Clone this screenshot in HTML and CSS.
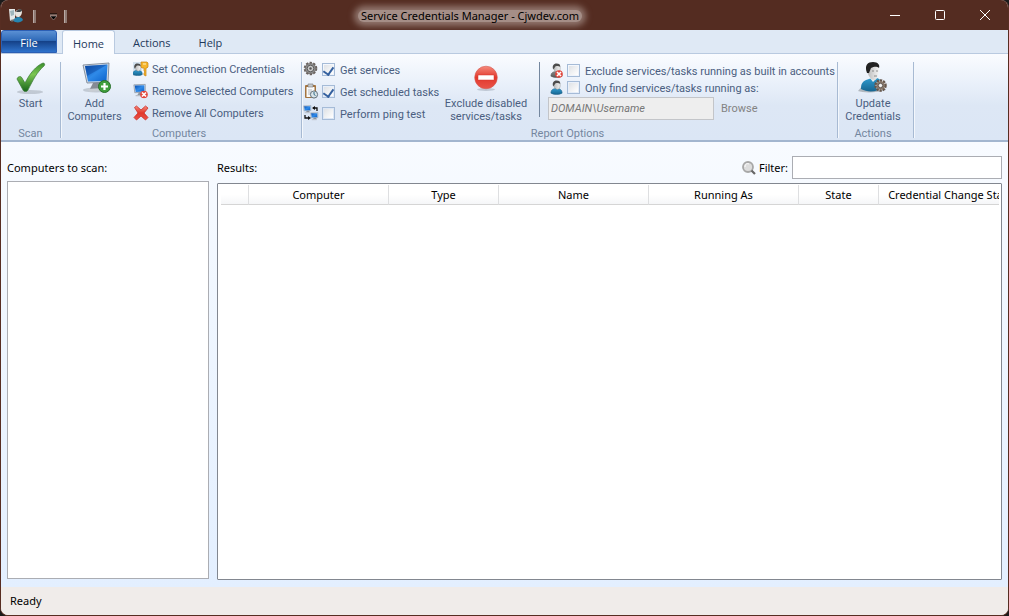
FILE: index.html
```html
<!DOCTYPE html>
<html lang="en">
<head>
<meta charset="utf-8">
<title>Service Credentials Manager - Cjwdev.com</title>
<link rel="stylesheet" href="styles.css">
</head>
<body>
<svg class="defs" aria-hidden="true">
  <defs>
    <linearGradient id="green" x1="0" y1="0" x2="0" y2="1"><stop offset="0" stop-color="#3b8f2c"/><stop offset=".4" stop-color="#7cc653"/><stop offset="1" stop-color="#17651a"/></linearGradient>
    <linearGradient id="screen" x1="0" y1="0" x2="1" y2="1"><stop offset="0" stop-color="#0a4fb0"/><stop offset=".5" stop-color="#2f8ae8"/><stop offset="1" stop-color="#0b62cc"/></linearGradient>
    <linearGradient id="red" x1="0" y1="0" x2="0" y2="1"><stop offset="0" stop-color="#f58a7c"/><stop offset=".5" stop-color="#e2382c"/><stop offset="1" stop-color="#e9544a"/></linearGradient>
    <linearGradient id="shirt" x1="0" y1="0" x2="0" y2="1"><stop offset="0" stop-color="#2f9bcf"/><stop offset="1" stop-color="#176590"/></linearGradient>
    <linearGradient id="face" x1="0" y1="0" x2="1" y2="0"><stop offset="0" stop-color="#b9b9b9"/><stop offset="1" stop-color="#f4f4f4"/></linearGradient>
    <symbol id="pc" viewBox="0 0 16 16"><path d="M1 1.500 14 1v9L2 10.500z" fill="#dfe6ee" stroke="#5d6b7c" stroke-width=".6"/><path d="M2 2.400 13 2v7.200L3 9.600z" fill="url(#screen)"/><path d="M7 10h4l1 3H5z" fill="#8d949c"/><path d="M3 13h9v1.500H3z" fill="#b7bdc5"/></symbol>
    <symbol id="person" viewBox="0 0 16 16"><path d="M2 14c0-4 3-5 6-5s6 1 6 5c-3 2-9 2-12 0z" fill="url(#shirt)" stroke="#175a80" stroke-width=".5"/><path d="M5 4c0-3 7-3 7 1 0 3-1 5-3 5S5 8 5 4z" fill="url(#face)" stroke="#777" stroke-width=".4"/><path d="M4.500 7C3 3 5 .500 8 .500c3 0 4 1 4 3.500C10 3 9 3 7 3.500z" fill="#4c4c4c"/></symbol>
    <symbol id="cross" viewBox="0 0 8 8"><circle cx="4" cy="4" r="3.800" fill="#e2463c"/><path d="m2 2 4 4m0-4L2 6" stroke="#fff" stroke-width="1.600"/></symbol>
    <symbol id="gear" viewBox="0 0 16 16"><circle cx="8" cy="8" r="6" fill="#777" stroke="#6a625e" stroke-width="2.500" stroke-dasharray="2.400 1.400"/><circle cx="8" cy="8" r="5.400" fill="#8b8b8b"/><circle cx="8" cy="8" r="3.500" fill="#ccc" stroke="#555"/><circle cx="8" cy="8" r="1.300" fill="#555"/></symbol>
  </defs>
</svg>
<div class="window">
  <header class="titlebar">
    <div class="quick">
      <svg width="16" height="16" viewBox="0 0 16 16"><path d="M1 1h6v11L2 13z" fill="#e4e9e9"/><path d="m2 3 4-1v5L3 8z" fill="#9fb7bd"/><path d="M7 5c0-3 6-5 7-2 0 4-2 6-4 6S7 8 7 5z" fill="#e8e5df"/><path d="M8 4c1-3 6-4 6-1l-2 1z" fill="#3d4447"/><path d="M5 13c1-4 8-6 10-1-2 3-7 3-10 1z" fill="#2585b1"/><path d="m2 12 5-1-3 3z" fill="#777"/></svg>
      <span class="bar"></span>
      <button class="customize" aria-label="Customize quick access toolbar"><svg width="7" height="7" viewBox="0 0 7 7"><path d="M0 1h7" stroke="#000"/><path d="M0 2h7" stroke="#cdbdb8" stroke-width=".8"/><path d="M0 3h7L3.500 7z" fill="#000" stroke="#cdbdb8" stroke-width=".5"/></svg></button>
      <span class="bar"></span>
    </div>
    <h1 class="title">Service Credentials Manager - Cjwdev.com</h1>
    <div class="controls">
      <button aria-label="Minimize"><svg width="10" height="10" viewBox="0 0 10 10"><path d="M0 5.500h10"/></svg></button>
      <button aria-label="Maximize"><svg width="10" height="10" viewBox="0 0 10 10"><rect x=".5" y=".5" width="9" height="9" rx="1"/></svg></button>
      <button aria-label="Close"><svg width="10" height="10" viewBox="0 0 10 10"><path d="m0 0 10 10M10 0 0 10"/></svg></button>
    </div>
  </header>

  <nav class="tabs">
    <button class="tab file">File</button>
    <button class="tab active">Home</button>
    <button class="tab">Actions</button>
    <button class="tab">Help</button>
  </nav>

  <section class="ribbon">
    <div class="group scan">
      <div class="tools">
        <button class="large"><svg width="32" height="32" viewBox="0 0 32 32"><ellipse cx="15" cy="30" rx="13" ry="2" fill="#a9b0ba" opacity=".6"/><path d="M2 17c1-3 4-3 5-1l3 5C15 11 21 4 28 1c2 0 2 2 1 3-7 6-11 14-16 24-1 2-4 2-5 0z" fill="url(#green)" stroke="#3b7a38" stroke-width=".7"/></svg>Start</button>
      </div>
      <div class="caption">Scan</div>
    </div>

    <div class="group computers">
      <div class="tools">
        <button class="large"><svg width="32" height="32" viewBox="0 0 32 32"><ellipse cx="17" cy="28" rx="13" ry="2.500" fill="#aab2bd" opacity=".6"/><path d="m14 21 9-1 2 7H11z" fill="#858b94"/><path d="m8 27 16-1 3 2-16 2z" fill="#c8cdd4"/><path d="m4 3 26-2-1 19-21 1z" fill="#d8dfe7" stroke="#707b8a" stroke-width=".8"/><path d="m6 4 22.500-1.500L27.500 19 9 19.500z" fill="url(#screen)"/><path d="M6 4 28.500 2.500 8 14z" fill="#0a3f96" opacity=".4"/><circle cx="25.500" cy="24.500" r="6" fill="#3f9e3c" stroke="#286f2a"/><path d="M25.500 21v7M22 24.500h7" stroke="#fff" stroke-width="2.200"/></svg>Add<br>Computers</button>
        <div class="stack actions">
          <button class="small"><svg width="16" height="16" viewBox="0 0 16 16"><rect y="1" width="9" height="14" fill="#d4e2ef"/><use href="#person" x="-2" y="2" width="13" height="13"/><path d="M8 1h6l1 1v4l-1 1h-1v8l-2-1v-2l1-1-1-1V7H9L8 6z" fill="#f5b52d" stroke="#c98412" stroke-width=".7"/><path d="M10 3h3" stroke="#fff2bd"/></svg>Set Connection Credentials</button>
          <button class="small"><svg width="16" height="16" viewBox="0 0 16 16"><use href="#pc" width="14" height="15"/><use href="#cross" x="7" y="7.500" width="8" height="8"/></svg>Remove Selected Computers</button>
          <button class="small"><svg width="16" height="16" viewBox="0 0 16 16"><path d="m1.500 2.500 2-1.500L8 5l4.500-4L15 3l-4 5 4 4.500-2.500 2.500L8 11l-4.500 4L1 12.500 5 8z" fill="url(#red)" stroke="#cb302a" stroke-width=".8"/></svg>Remove All Computers</button>
        </div>
      </div>
      <div class="caption">Computers</div>
    </div>

    <div class="group report">
      <div class="tools">
        <div class="stack checks">
          <label><svg width="16" height="16"><use href="#gear" width="15" height="15"/></svg><input type="checkbox" checked><span>Get services</span></label>
          <label><svg width="16" height="16" viewBox="0 0 16 16"><rect x="2" y="2" width="11" height="13" rx="1" fill="#a4743f"/><path d="M3.500 4h8v10h-8z" fill="#fafafa"/><path d="M5 1h5v3H5z" fill="#c5c9cd" stroke="#777" stroke-width=".6"/><path d="M5 7h4M5 9h3M5 11h3" stroke="#b6bcc3"/><circle cx="11" cy="11.500" r="3.600" fill="#d9e4e9" stroke="#62717c"/><path d="M11 9v2.500l1.500 1" fill="none" stroke="#306b86"/></svg><input type="checkbox" checked><span>Get scheduled tasks</span></label>
          <label><svg width="16" height="16" viewBox="0 0 16 16"><use href="#pc" width="9" height="9"/><use href="#pc" x="7" y="7" width="9" height="9"/><path d="M10 3h4v3M6 13H2v-3" fill="none" stroke="#111" stroke-width="1.300"/><path d="m12 1-3 2 3 2zM5 11l3 2-3 2z" fill="#111"/></svg><input type="checkbox"><span>Perform ping test</span></label>
        </div>
        <button class="large exclude"><svg width="32" height="32" viewBox="0 0 32 32"><ellipse cx="16" cy="27.500" rx="9" ry="1.500" fill="#9aa4b2" opacity=".5"/><circle cx="16" cy="15.500" r="11.300" fill="url(#red)" stroke="#d45a52" stroke-width=".6"/><rect x="8" y="13" width="16" height="5" rx=".5" fill="#fff" stroke="#d5342c" stroke-width=".5"/></svg>Exclude disabled<br>services/tasks</button>
        <div class="accounts">
          <label><svg width="16" height="16" viewBox="0 0 16 16"><g filter="grayscale(1)"><use href="#person" width="15" height="15"/></g><use href="#cross" x="6" y="7" width="8" height="8"/></svg><input type="checkbox"><span>Exclude services/tasks running as built in accounts</span></label>
          <label><svg width="16" height="16"><use href="#person" width="15" height="15"/></svg><input type="checkbox"><span>Only find services/tasks running as:</span></label>
          <div class="user"><input type="text" placeholder="DOMAIN\Username" aria-label="Account" disabled><button disabled>Browse</button></div>
        </div>
      </div>
      <div class="caption">Report Options</div>
    </div>

    <div class="group update">
      <div class="tools">
        <button class="large"><svg width="32" height="32" viewBox="0 0 32 32"><path d="M1 29c5 2 19 2 28-1l-4-6H7z" fill="#a3a9af" opacity=".8"/><path d="M4 27c0-5 1-7 5-9l6-2h5c5 2 6 5 6 9-5 5-15 6-22 2z" fill="url(#shirt)"/><path d="m13 16 3 4 4-4z" fill="#eee"/><path d="M10 7c0-7 12-7 12 0 0 6-2 11-5 11s-7-5-7-11z" fill="url(#face)"/><path d="M10 11C7 3 11 0 16 0c5 0 7 3 6 6-3-2-5-1-8 0l-2 5z" fill="#222"/><path d="M15 9h2m2 0h2M17 14h3" stroke="#777" stroke-width=".8"/><g transform="translate(17 16)"><circle cx="6.500" cy="7.500" r="5" fill="#d5cdc4" stroke="#65564c" stroke-width="2.500" stroke-dasharray="2.200 1"/><circle cx="6.500" cy="7.500" r="4" fill="#87776a"/><circle cx="6.500" cy="7.500" r="2.200" fill="#f2f2f2" stroke="#4c4541" stroke-width=".8"/></g></svg>Update<br>Credentials</button>
      </div>
      <div class="caption">Actions</div>
    </div>
  </section>

  <main class="content">
    <section class="side">
      <h2 class="heading">Computers to scan:</h2>
      <div class="list"></div>
    </section>
    <section class="results">
      <div class="resultbar">
        <h2 class="heading">Results:</h2>
        <label class="filter"><svg width="16" height="16" viewBox="0 0 16 16"><circle cx="7" cy="7" r="5" fill="#ddd" stroke="#a7a7a7" stroke-width="1.800"/><path d="M4 7c0-3 2-4 4-3" fill="none" stroke="#fff"/><path d="m10.500 10.500 3.500 3.500" stroke="#666" stroke-width="2.200"/></svg>Filter:<input type="text"></label>
      </div>
      <div class="grid">
        <div class="viewport">
          <table>
            <colgroup><col class="c-icon"><col class="c-computer"><col class="c-type"><col class="c-wide"><col class="c-wide"><col class="c-state"><col class="c-wide"></colgroup>
            <thead><tr><th></th><th>Computer</th><th>Type</th><th>Name</th><th>Running As</th><th>State</th><th>Credential Change Status</th></tr></thead>
          </table>
        </div>
      </div>
    </section>
  </main>
  <footer class="status">Ready</footer>
</div>
</body>
</html>
```

FILE: styles.css
```css
* { box-sizing: border-box; }
body {
  margin: 0;
  background: #1b1b1b;
  font: 11px/13px "Noto Sans", "Open Sans", sans-serif;
  color: #000;
}
button, input { font: inherit; color: inherit; }
button { border: 0; padding: 0; background: none; }
h1, h2 { margin: 0; font: inherit; }
svg { flex: none; }
.defs { position: absolute; width: 0; height: 0; }

.window {
  display: flex;
  flex-direction: column;
  height: 100vh;
  border: 1px solid #572d22;
  border-top: 0;
  border-radius: 8px;
  overflow: hidden;
  background: #efebea;
}

.titlebar {
  display: grid;
  grid-template-columns: 68px 1fr 137px;
  align-items: center;
  height: 30px;
  flex: none;
  background: #542c21;
}
.quick { display: flex; align-items: center; padding: 2px 0 0 7px; }
.bar { width: 3px; height: 13px; margin-left: 9px; background: #8e7972; border-left: 1px solid #b9aaa5; }
.customize { display: flex; margin-left: 14px; }
.customize + .bar { margin-left: 7px; }
.title {
  justify-self: center;
  margin-top: 2px;
  padding: 0 3px;
  line-height: 12px;
  border-radius: 6px;
  background: #a58e87;
  box-shadow: 0 0 6px 4px #92776f;
}
.controls { display: flex; justify-content: flex-end; padding-right: 1px; }
.controls button { display: flex; justify-content: center; width: 45px; }
.controls svg { fill: none; stroke: #fff; overflow: visible; }

.tabs { display: flex; height: 24px; flex: none; background: #dfe9f5; border-bottom: 1px solid #b9cae0; font-family: "Open Sans", "Noto Sans", sans-serif; }
.tab { padding: 2px 14px 0; height: 23px; color: #1e395b; }
.file {
  width: 56px;
  margin-right: 5px;
  padding: 2px 0 0;
  color: #fff;
  border: 1px solid #2c5fb4;
  border-radius: 3px 3px 0 0;
  background: linear-gradient(#5a90d4, #2f6ab8 45%, #154289 50%, #2f73cc);
}
.active { position: relative; width: 53px; height: 24px; margin-right: 4px; padding: 1px 0 0; background: #fafcff; border: 1px solid #b9cae0; border-bottom: 0; border-radius: 3px 3px 0 0; }

.ribbon {
  display: flex;
  height: 88px;
  flex: none;
  padding: 8px 0 2px;
  color: #4a5e80;
  font-family: Roboto, "Noto Sans", sans-serif;
  background: linear-gradient(#fafcff, #e9f0fa 35%, #dde7f5 60%, #dbe6f5);
  border-bottom: 2px solid #a3b6cf;
}
.group { display: flex; flex-direction: column; justify-content: space-between; flex: none; border-right: 1px solid #a7bad3; box-shadow: 1px 0 #f3f7fc; }
.scan { width: 60px; }
.computers { width: 241px; }
.report { width: 536px; }
.update { width: 76px; padding-right: 5px; }
.caption { text-align: center; line-height: 8px; color: #74869f; }
.computers .caption, .report .caption { padding-right: 4px; }
.tools { display: flex; justify-content: center; }
.computers .tools, .report .tools { justify-content: flex-start; }
.large { display: flex; flex-direction: column; align-items: center; gap: 3px; white-space: nowrap; }
.computers .large { width: 67px; }
.stack { display: flex; flex-direction: column; gap: 6px; }
.actions { margin: -1px 0 0 5px; }
.small, .checks label, .accounts label { display: flex; align-items: center; height: 16px; white-space: nowrap; }
.small { gap: 3px; }
.checks { width: 138px; margin-top: -1px; padding-left: 1px; }
.checks span, .accounts span { padding-top: 2px; }
.exclude { width: 92px; }
input[type="checkbox"] {
  appearance: none;
  display: grid;
  place-items: center;
  width: 13px;
  height: 13px;
  margin: 0 5px 0 3px;
  border: 1px solid #a5bbd7;
  background: linear-gradient(135deg, #dfe2e6, #fff) content-box;
  background-color: #f7f9fc;
  padding: 1px;
}
input[type="checkbox"]:checked::before {
  content: "";
  width: 5px;
  height: 8px;
  margin-bottom: 2px;
  border: solid #34609f;
  border-width: 0 2px 2px 0;
  transform: rotate(35deg);
}
.accounts { margin-left: 7px; padding-left: 8px; border-left: 1px solid #74879f; height: 55px; }
.accounts label { height: 17px; }
.accounts input[type="checkbox"] { margin-left: 2px; }
.accounts label svg { margin-left: 1px; }
.user { display: flex; align-items: center; gap: 7px; margin-top: 1px; color: #838383; }
.user input { width: 166px; height: 23px; padding: 0 2px; border: 1px solid #c3c5c9; background: #eee; font-style: italic; }
.user input::placeholder { color: #777; opacity: 1; }

.content {
  display: grid;
  grid-template-columns: 202px minmax(0, 1fr);
  gap: 8px;
  flex: 1;
  min-height: 0;
  padding: 14px 6px 7px;
  background: linear-gradient(#f8fbff, #eff6ff 40%, #e3efff);
}
.side, .results { display: flex; flex-direction: column; min-width: 0; }
.side .heading { height: 25px; line-height: 24px; }
.list { flex: 1; margin-bottom: 1px; border: 1px solid #abadb3; background: #fff; }
.resultbar { display: flex; justify-content: space-between; align-items: center; height: 23px; margin-bottom: 4px; }
.resultbar .heading { line-height: 24px; }
.filter { display: flex; align-items: center; gap: 2px; }
.filter input { width: 210px; height: 23px; margin: 0 0 0 2px; border: 1px solid #abadb3; background: #fff; }
.grid { flex: 1; padding: 1px 2px 2px 3px; border: 1px solid #828790; border-radius: 1px; background: #fff; }
.viewport { overflow: hidden; }
table { table-layout: fixed; width: 808px; border-collapse: separate; border-spacing: 0; }
.c-icon { width: 28px; }
.c-computer { width: 140px; }
.c-type { width: 110px; }
.c-wide { width: 150px; }
.c-state { width: 80px; }
th { height: 20px; padding: 0; font-weight: 400; white-space: nowrap; background: linear-gradient(#fff 50%, #f5f6f8); border-right: 1px solid #dedfe1; border-bottom: 1px solid #d5d5d5; }
.status { height: 28px; flex: none; padding: 0 9px; line-height: 27px; background: #f0ecea; }
```
